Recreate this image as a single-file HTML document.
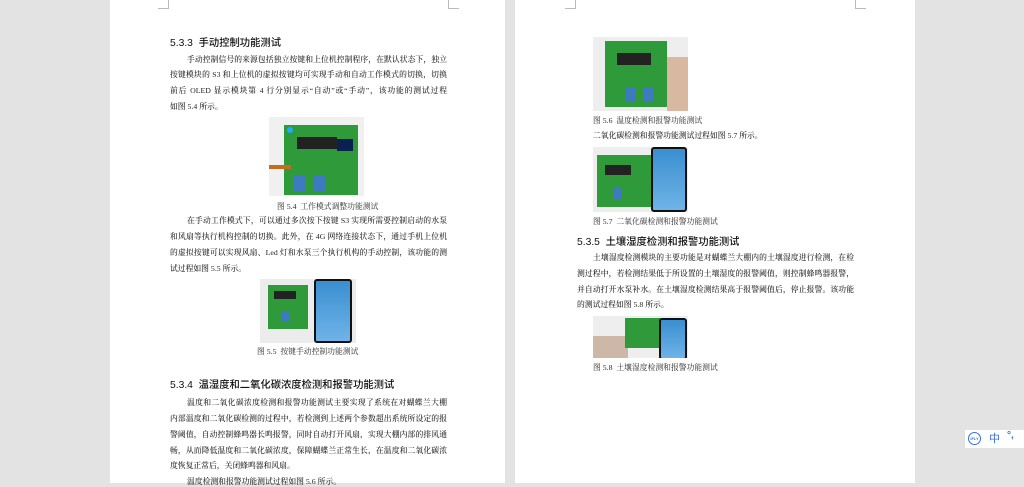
<!DOCTYPE html>
<html><head><meta charset="utf-8"><style>
body{margin:0;width:1024px;height:483px;background:#e3e3e3;position:relative;overflow:hidden;font-family:"Liberation Serif","Noto Serif CJK SC",serif;color:#222}
.page{position:absolute;top:0;height:483px;background:#fff}
.l{position:absolute;font-size:7.8px;line-height:10px;white-space:nowrap;text-align:justify;text-align-last:justify;color:#1e1e1e;font-weight:500}
.e{text-align-last:left}
.h{position:absolute;font-family:"Liberation Sans","Noto Sans CJK SC",sans-serif;font-size:10.3px;color:#111;white-space:nowrap;line-height:12px;font-weight:500}
.c{position:absolute;font-size:7.8px;line-height:10px;white-space:nowrap;color:#2a2a2a}
.img{position:absolute;background:#e8ece8;overflow:hidden}
.b{position:absolute;background:#2f9a3a}
.chip{position:absolute;background:#222}
.ph{position:absolute;background:linear-gradient(#3a8fd0,#6fb3e8);border:2px solid #111;border-radius:3px}
.mk{position:absolute;border-color:#bbb;border-style:solid;width:10px;height:8px}
</style></head><body>
<div class="page" style="left:110px;width:395px"></div>
<div class="page" style="left:515px;width:400px"></div>
<div style="position:absolute;left:506px;top:0;width:9px;height:483px;background:#e3e3e3"></div>
<div class="mk" style="left:158px;top:0;border-width:0 1px 1px 0"></div>
<div class="mk" style="left:448px;top:0;border-width:0 0 1px 1px"></div>
<div class="mk" style="left:565px;top:0;border-width:0 1px 1px 0"></div>
<div class="mk" style="left:855px;top:0;border-width:0 0 1px 1px"></div>

<!-- left page -->
<div class="h" style="left:170px;top:38px">5.3.3&nbsp; 手动控制功能测试</div>
<div class="l" style="left:187px;top:55px;width:260px">手动控制信号的来源包括独立按键和上位机控制程序，在默认状态下，独立</div>
<div class="l" style="left:170px;top:70px;width:277px">按键模块的 S3 和上位机的虚拟按键均可实现手动和自动工作模式的切换，切换</div>
<div class="l" style="left:170px;top:86px;width:277px">前后 OLED 显示模块第 4 行分别显示“自动”或“手动”，该功能的测试过程</div>
<div class="l e" style="left:170px;top:102px;width:277px">如图 5.4 所示。</div>
<div class="img" style="left:269px;top:117px;width:95px;height:79px;background:#f0f0f0">
 <div class="b" style="left:15px;top:8px;width:74px;height:70px"></div>
 <div class="chip" style="left:28px;top:20px;width:40px;height:12px"></div>
 <div class="chip" style="left:68px;top:22px;width:16px;height:12px;background:#0a2050"></div>
 <div style="position:absolute;left:25px;top:58px;width:12px;height:16px;background:#3d7ac0"></div>
 <div style="position:absolute;left:45px;top:58px;width:12px;height:16px;background:#3d7ac0"></div>
 <div style="position:absolute;left:0;top:48px;width:22px;height:4px;background:#c86a20"></div>
 <div style="position:absolute;left:18px;top:10px;width:6px;height:6px;border-radius:50%;background:#2af"></div>
</div>
<div class="c" style="left:277px;top:202px">图 5.4&nbsp; 工作模式调整功能测试</div>
<div class="l" style="left:187px;top:216px;width:260px">在手动工作模式下，可以通过多次按下按键 S3 实现所需要控制启动的水泵</div>
<div class="l" style="left:170px;top:232px;width:277px">和风扇等执行机构控制的切换。此外，在 4G 网络连接状态下，通过手机上位机</div>
<div class="l" style="left:170px;top:248px;width:277px">的虚拟按键可以实现风扇、Led 灯和水泵三个执行机构的手动控制，该功能的测</div>
<div class="l e" style="left:170px;top:264px;width:277px">试过程如图 5.5 所示。</div>
<div class="img" style="left:260px;top:279px;width:96px;height:64px;background:#ececec">
 <div class="b" style="left:8px;top:6px;width:40px;height:44px"></div>
 <div class="chip" style="left:14px;top:12px;width:22px;height:8px"></div>
 <div style="position:absolute;left:22px;top:32px;width:8px;height:10px;background:#3d7ac0"></div>
 <div class="ph" style="left:54px;top:0;width:34px;height:60px"></div>
</div>
<div class="c" style="left:257px;top:347px">图 5.5&nbsp; 按键手动控制功能测试</div>
<div class="h" style="left:170px;top:380px">5.3.4&nbsp; 温湿度和二氧化碳浓度检测和报警功能测试</div>
<div class="l" style="left:187px;top:398px;width:260px">温度和二氧化碳浓度检测和报警功能测试主要实现了系统在对蝴蝶兰大棚</div>
<div class="l" style="left:170px;top:414px;width:277px">内部温度和二氧化碳检测的过程中，若检测到上述两个参数超出系统所设定的报</div>
<div class="l" style="left:170px;top:430px;width:277px">警阈值，自动控制蜂鸣器长鸣报警，同时自动打开风扇，实现大棚内部的排风通</div>
<div class="l" style="left:170px;top:446px;width:277px">畅，从而降低温度和二氧化碳浓度，保障蝴蝶兰正常生长，在温度和二氧化碳浓</div>
<div class="l e" style="left:170px;top:461px;width:277px">度恢复正常后，关闭蜂鸣器和风扇。</div>
<div class="l e" style="left:187px;top:477px;width:260px">温度检测和报警功能测试过程如图 5.6 所示。</div>

<!-- right page -->
<div class="img" style="left:593px;top:37px;width:95px;height:74px;background:#eee">
 <div class="b" style="left:12px;top:4px;width:62px;height:66px"></div>
 <div class="chip" style="left:24px;top:16px;width:34px;height:12px"></div>
 <div style="position:absolute;left:33px;top:50px;width:10px;height:14px;background:#3d7ac0"></div>
 <div style="position:absolute;left:50px;top:50px;width:10px;height:14px;background:#3d7ac0"></div>
 <div style="position:absolute;left:74px;top:20px;width:21px;height:54px;background:#d8b8a0"></div>
</div>
<div class="c" style="left:593px;top:116px">图 5.6&nbsp; 温度检测和报警功能测试</div>
<div class="l e" style="left:593px;top:131px;width:260px">二氧化碳检测和报警功能测试过程如图 5.7 所示。</div>
<div class="img" style="left:593px;top:147px;width:95px;height:65px;background:#eee">
 <div class="b" style="left:4px;top:8px;width:56px;height:52px"></div>
 <div class="chip" style="left:12px;top:18px;width:26px;height:10px"></div>
 <div style="position:absolute;left:20px;top:40px;width:8px;height:12px;background:#3d7ac0"></div>
 <div class="ph" style="left:58px;top:0;width:32px;height:61px"></div>
</div>
<div class="c" style="left:593px;top:217px">图 5.7&nbsp; 二氧化碳检测和报警功能测试</div>
<div class="h" style="left:577px;top:237px">5.3.5&nbsp; 土壤湿度检测和报警功能测试</div>
<div class="l" style="left:593px;top:253px;width:261px">土壤湿度检测模块的主要功能是对蝴蝶兰大棚内的土壤湿度进行检测，在检</div>
<div class="l" style="left:577px;top:269px;width:277px">测过程中，若检测结果低于所设置的土壤湿度的报警阈值，则控制蜂鸣器报警，</div>
<div class="l" style="left:577px;top:285px;width:277px">并自动打开水泵补水。在土壤湿度检测结果高于报警阈值后，停止报警。该功能</div>
<div class="l e" style="left:577px;top:300px;width:277px">的测试过程如图 5.8 所示。</div>
<div class="img" style="left:593px;top:316px;width:95px;height:42px;background:#eee">
 <div style="position:absolute;left:0;top:20px;width:35px;height:22px;background:#cdb8a8"></div>
 <div class="b" style="left:32px;top:2px;width:36px;height:30px"></div>
 <div class="ph" style="left:66px;top:2px;width:24px;height:38px"></div>
</div>
<div class="c" style="left:593px;top:363px">图 5.8&nbsp; 土壤湿度检测和报警功能测试</div>

<!-- IME widget -->
<div style="position:absolute;left:965px;top:430px;width:59px;height:18px;background:#fff"></div>
<div style="position:absolute;left:968px;top:432px;width:11px;height:11px;border:1.5px solid #3a6fe0;border-radius:50%;font:bold 4px 'Liberation Sans',sans-serif;color:#3a6fe0;text-align:center;line-height:11px">iFLY</div>
<div style="position:absolute;left:989px;top:431px;font:11px 'Noto Sans CJK SC',sans-serif;color:#3a6fe0;line-height:14px">中</div>
<div style="position:absolute;left:1007px;top:430px;font:bold 10px 'Liberation Sans',sans-serif;color:#3a6fe0">°,</div>
</body></html>
